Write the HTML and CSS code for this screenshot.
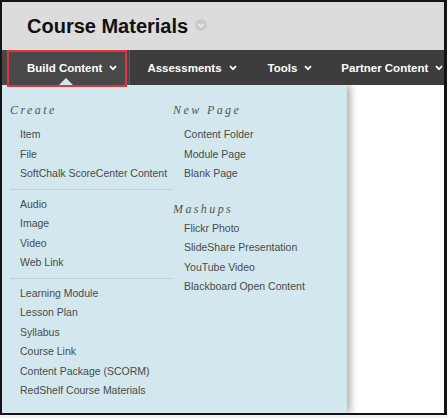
FILE: index.html
```html
<!DOCTYPE html>
<html>
<head>
<meta charset="utf-8">
<link rel="stylesheet" href="styles.css">
</head>
<body>
<div class="frame">
  <header class="page-head">
    <h1 class="title">Course Materials</h1>
    <span class="title-menu"><svg width="12" height="12" viewBox="0 0 12 12"><circle cx="6" cy="6" r="6" fill="#c9c9c9"/><polyline points="3.2,5 6,7.8 8.8,5" fill="none" stroke="#ececec" stroke-width="1.6"/></svg></span>
  </header>
  <nav class="navbar">
    <div class="nav-item active">
      <span>Build Content</span>
      <svg class="chev" width="8" height="6" viewBox="0 0 8 6"><polyline points="1,1.2 4,4.2 7,1.2" fill="none" stroke="#fff" stroke-width="1.8"/></svg>
      <span class="highlight"></span>
      <span class="pointer"></span>
    </div>
    <div class="nav-item assess">
      <span>Assessments</span>
      <svg class="chev" width="8" height="6" viewBox="0 0 8 6"><polyline points="1,1.2 4,4.2 7,1.2" fill="none" stroke="#fff" stroke-width="1.8"/></svg>
    </div>
    <div class="nav-item tools">
      <span>Tools</span>
      <svg class="chev" width="8" height="6" viewBox="0 0 8 6"><polyline points="1,1.2 4,4.2 7,1.2" fill="none" stroke="#fff" stroke-width="1.8"/></svg>
    </div>
    <div class="nav-item partner">
      <span>Partner Content</span>
      <svg class="chev" width="8" height="6" viewBox="0 0 8 6"><polyline points="1,1.2 4,4.2 7,1.2" fill="none" stroke="#fff" stroke-width="1.8"/></svg>
    </div>
  </nav>
  <div class="content">
    <div class="panel">
      <div class="col left">
        <h2 class="group-head">Create</h2>
        <ul class="items">
          <li>Item</li>
          <li>File</li>
          <li>SoftChalk ScoreCenter Content</li>
        </ul>
        <hr class="sep">
        <ul class="items">
          <li>Audio</li>
          <li>Image</li>
          <li>Video</li>
          <li>Web Link</li>
        </ul>
        <hr class="sep">
        <ul class="items">
          <li>Learning Module</li>
          <li>Lesson Plan</li>
          <li>Syllabus</li>
          <li>Course Link</li>
          <li>Content Package (SCORM)</li>
          <li>RedShelf Course Materials</li>
        </ul>
      </div>
      <div class="col right">
        <h2 class="group-head">New Page</h2>
        <ul class="items">
          <li>Content Folder</li>
          <li>Module Page</li>
          <li>Blank Page</li>
        </ul>
        <h2 class="group-head mash">Mashups</h2>
        <ul class="items">
          <li>Flickr Photo</li>
          <li>SlideShare Presentation</li>
          <li>YouTube Video</li>
          <li>Blackboard Open Content</li>
        </ul>
      </div>
    </div>
    <div class="rest"></div>
  </div>
</div>
</body>
</html>
```
FILE: styles.css
```css
html, body {
  margin: 0;
  padding: 0;
  background: #f2f2f2;
}
body {
  width: 447px;
  height: 418px;
  overflow: hidden;
  font-family: "Liberation Sans", Arial, sans-serif;
}
.frame {
  box-sizing: border-box;
  width: 447px;
  height: 415px;
  border-style: solid;
  border-color: #141414;
  border-width: 2px 3px 2px 2px;
  display: flex;
  flex-direction: column;
  background: #fff;
  overflow: hidden;
}
.page-head {
  height: 48px;
  background: #dcdcdc;
  display: flex;
  align-items: center;
  padding-left: 25px;
  flex: none;
}
.title {
  margin: 0;
  font-size: 20px;
  font-weight: bold;
  color: #111;
  line-height: 24px;
}
.title-menu {
  display: flex;
  margin-left: 7px;
  margin-top: -2px;
}
.navbar {
  height: 35px;
  flex: none;
  background: #3d3d3d;
  display: flex;
  align-items: stretch;
  position: relative;
  z-index: 2;
}
.nav-item {
  position: relative;
  flex: none;
  display: flex;
  align-items: center;
  gap: 7px;
  color: #fff;
  font-size: 11.5px;
  font-weight: bold;
  white-space: nowrap;
  padding: 0 0 0 17px;
}
.nav-item.active {
  background: #484848;
  padding: 0 12px 0 25px;
  border-right: 1px solid #5a5a5a;
}
.nav-item.tools { padding-left: 31px; }
.nav-item.partner { padding-left: 29px; }
.chev {
  display: block;
  margin-top: 1px;
}
.highlight {
  position: absolute;
  left: 5px;
  top: 0;
  width: 120px;
  height: 37px;
  border: 2px solid #e0353c;
  box-sizing: border-box;
}
.pointer {
  position: absolute;
  left: 57px;
  bottom: 0;
  width: 0;
  height: 0;
  border-left: 7px solid transparent;
  border-right: 7px solid transparent;
  border-bottom: 7px solid #d2e8ee;
}
.content {
  flex: 1;
  display: flex;
  min-height: 0;
}
.panel {
  width: 345px;
  flex: none;
  background: #d2e8ee;
  box-shadow: 3px 0 8px rgba(0,0,0,0.35);
  display: flex;
  padding: 15px 0 0 8px;
  box-sizing: border-box;
  position: relative;
  z-index: 1;
}
.rest {
  flex: 1;
  background: #fff;
}
.col.left {
  width: 163px;
}
.col.right {
  width: 170px;
}
.group-head {
  margin: 0 0 5px;
  font-family: "Liberation Serif", "Times New Roman", serif;
  font-style: italic;
  font-weight: normal;
  font-size: 12px;
  letter-spacing: 2.4px;
  color: #555;
  line-height: 20px;
}
.group-head.mash {
  margin-top: 15px;
  margin-bottom: 0;
}
.items {
  list-style: none;
  margin: 0;
  padding: 0 0 0 10px;
}
.items li {
  font-size: 10.5px;
  color: #4a4a4a;
  line-height: 19.5px;
  white-space: nowrap;
}
.col.right .items {
  padding-left: 11px;
}
.sep {
  border: 0;
  height: 1px;
  background: #bcd2d8;
  margin: 5px 0 5px;
}
```
